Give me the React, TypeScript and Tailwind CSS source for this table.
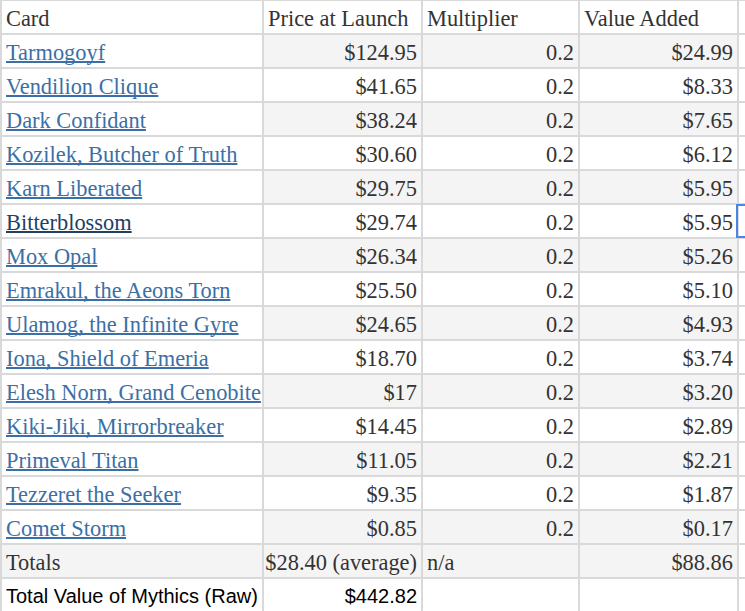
const rows: [string, string, string, boolean?][] = [
  ["Tarmogoyf", "$124.95", "$24.99"],
  ["Vendilion Clique", "$41.65", "$8.33"],
  ["Dark Confidant", "$38.24", "$7.65"],
  ["Kozilek, Butcher of Truth", "$30.60", "$6.12"],
  ["Karn Liberated", "$29.75", "$5.95"],
  ["Bitterblossom", "$29.74", "$5.95", true],
  ["Mox Opal", "$26.34", "$5.26"],
  ["Emrakul, the Aeons Torn", "$25.50", "$5.10"],
  ["Ulamog, the Infinite Gyre", "$24.65", "$4.93"],
  ["Iona, Shield of Emeria", "$18.70", "$3.74"],
  ["Elesh Norn, Grand Cenobite", "$17", "$3.20"],
  ["Kiki-Jiki, Mirrorbreaker", "$14.45", "$2.89"],
  ["Primeval Titan", "$11.05", "$2.21"],
  ["Tezzeret the Seeker", "$9.35", "$1.87"],
  ["Comet Storm", "$0.85", "$0.17"],
];

const base = "h-[32px] flex items-center px-1 whitespace-nowrap overflow-visible";
const cell = `${base} pt-[5px]`;
const sansCell = `${base} pt-[1px] text-[20px] text-black`;
const sans = { fontFamily: '"Liberation Sans", Arial, sans-serif' };

export default function App() {
  return (
    <div className="w-[745px] h-[611px] overflow-hidden bg-white">
      <div
        className="grid grid-cols-[260px_157px_155px_157px_40px] gap-[2px] bg-[#d9d9d9] pl-[2px] pt-[1px] pb-[2px] w-max text-[22.4px] leading-none text-[#333]"
        style={{ fontFamily: '"Liberation Serif", "Times New Roman", serif' }}
      >
        {/* header */}
        <div className={`${cell} bg-white`}>Card</div>
        <div className={`${cell} bg-white`}>Price at Launch</div>
        <div className={`${cell} bg-white`}>Multiplier</div>
        <div className={`${cell} bg-white`}>Value Added</div>
        <div className={`${cell} bg-white`}></div>

        {rows.map(([name, price, value, visited], i) => {
          const shade = i % 2 === 0 ? "bg-[#f4f4f4]" : "bg-white";
          return (
            <div key={name} className="contents">
              <div className={`${cell} bg-white`}>
                <a
                  href="#"
                  className={`underline decoration-2 underline-offset-[1px] [text-decoration-skip-ink:none] ${
                    visited ? "text-[#22405f]" : "text-[#3b6fa6]"
                  }`}
                >
                  {name}
                </a>
              </div>
              <div className={`${cell} ${shade} justify-end`}>{price}</div>
              <div className={`${cell} ${shade} justify-end`}>0.2</div>
              <div className={`${cell} ${shade} justify-end`}>{value}</div>
              <div className={`${cell} bg-white relative`}>
                {visited && (
                  <div className="absolute -left-[3px] -top-[1px] -bottom-[1px] -right-[10px] border-2 border-[#4a86e8]" />
                )}
              </div>
            </div>
          );
        })}

        {/* totals */}
        <div className={`${cell} bg-[#f4f4f4]`}>Totals</div>
        <div className={`${cell} bg-[#f4f4f4] justify-end`}>$28.40 (average)</div>
        <div className={`${cell} bg-[#f4f4f4]`}>n/a</div>
        <div className={`${cell} bg-[#f4f4f4] justify-end`}>$88.86</div>
        <div className={`${cell} bg-white`}></div>

        <div className={`${sansCell} bg-white`} style={sans}>
          Total Value of Mythics (Raw)
        </div>
        <div className={`${sansCell} bg-white justify-end`} style={sans}>
          $442.82
        </div>
        <div className={`${cell} bg-white`}></div>
        <div className={`${cell} bg-white`}></div>
        <div className={`${cell} bg-white`}></div>
      </div>
    </div>
  );
}
